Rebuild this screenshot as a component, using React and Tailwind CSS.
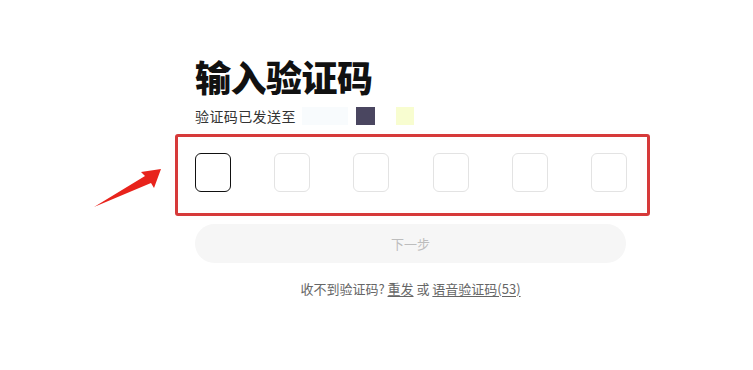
import React from "react";

const font = { fontFamily: '"Noto Sans CJK SC", "Noto Sans", sans-serif' };

const Arrow = () => (
  <svg
    className="absolute left-0 top-0"
    width="200"
    height="240"
    viewBox="0 0 200 240"
  >
    <polygon
      points="94,207 145,176 141,172 161,169 154,188 151,183"
      fill="#e8231c"
    />
  </svg>
);

const App = () => {
  const boxes = [0, 1, 2, 3, 4, 5];

  return (
    <div
      className="relative w-[753px] h-[370px] bg-white overflow-hidden"
      style={font}
    >
      <Arrow />
      <div className="flex flex-col w-[431px] ml-[195px]">
        {/* title */}
        <h1 className="mt-[56px] text-[36px] leading-[40px] font-black text-[#111] tracking-[-0.5px]">
          输入验证码
        </h1>
        <div className="mt-[10px] flex items-center h-[20px]">
          <span className="text-[14px] text-[#333] tracking-[0.4px]">验证码已发送至</span>
          <span className="ml-[6px] w-[46px] h-[18px] bg-[#f8fbfd]" />
          <span className="ml-[8px] w-[19px] h-[18px] bg-[#4a4660]" />
          <span className="ml-[21px] w-[18px] h-[18px] bg-[#f8fdd0]" />
        </div>

        {/* code inputs, marked with red box */}
        <div className="mt-[8px] -ml-[20px] w-[475px] border-[3px] border-[#d63a3a] rounded-[3px] pt-[16px] pb-[21px] pl-[17px] pr-[20px]">
          <div className="flex justify-between">
            {boxes.map((i) => (
              <div
                key={i}
                className={
                  i === 0
                    ? "w-[36px] h-[39px] rounded-[6px] border-[1.5px] border-[#111]"
                    : "w-[36px] h-[39px] rounded-[6px] border border-[#e3e3e3]"
                }
              />
            ))}
          </div>
        </div>

        <button className="mt-[8px] h-[39px] w-full rounded-full bg-[#f6f6f6] text-[13px] text-[#bdbdbd]">
          下一步
        </button>

        <p className="mt-[16px] text-center text-[13px] leading-[20px] text-[#666]">
          收不到验证码? <span className="underline underline-offset-2">重发</span> 或{" "}
          <span className="underline underline-offset-2">语音验证码(53)</span>
        </p>
      </div>
    </div>
  );
};

export default App;
